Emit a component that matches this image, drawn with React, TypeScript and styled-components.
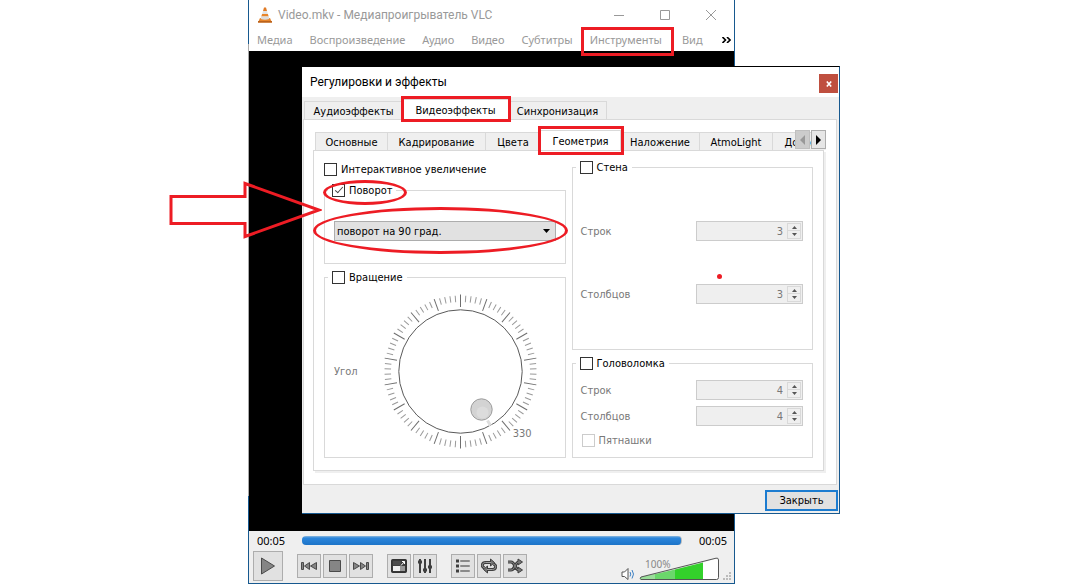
import React from 'react';
import styled, { createGlobalStyle, css } from 'styled-components';

const uiFont = '"DejaVu Sans Condensed", "Noto Sans", sans-serif';
const menuFont = '"Noto Sans", "Open Sans", sans-serif';
const titleFont = 'Roboto, "Noto Sans", sans-serif';
const red = '#ed1c24';
const line = '#d9d9d9';
const face = '#efefef';
const accent = '#17598f';

const GlobalStyle = createGlobalStyle`
  *, *::before, *::after { box-sizing: border-box; }
  body { margin: 0; background: #fff; font-family: ${uiFont}; font-size: 11px; line-height: 13px; color: #000; }
  button, input, select { font: inherit; color: inherit; margin: 0; padding: 0; }
  button { display: flex; align-items: center; justify-content: center; }
  svg { display: block; }
`;

/* red marker frame drawn round a control */
const marked = css`
  position: relative;
  &::after {
    content: '';
    position: absolute;
    border: 3px solid ${red};
    pointer-events: none;
    z-index: 3;
  }
`;

const Desktop = styled.main`
  display: flex;
  min-height: 100vh;
  min-width: 1000px;
  padding: 0 346px 1px 248px;
`;

const PlayerWindow = styled.section`
  flex: 1;
  min-width: 0;
  display: flex;
  flex-direction: column;
  border-right: 1px solid ${accent};
  border-bottom: 1px solid ${accent};
  padding-left: 1px;
  background: linear-gradient(${accent} 0 44px, #a9a9a9 44px 496px, ${accent} 496px);
`;

const TitleBar = styled.header`
  display: flex;
  align-items: center;
  height: 29px;
  padding: 0 17px 0 8px;
  gap: 5px;
  background: #fff;
  font-family: ${titleFont};
  font-size: 12px;
  line-height: 16px;
  color: #999;
`;

const WindowTitle = styled.h1`
  flex: 1;
  margin: 0;
  font: inherit;
  white-space: nowrap;
`;

const CaptionButtons = styled.div`
  display: flex;
  gap: 34px;
`;

const CaptionButton = styled.button`
  width: 12px;
  height: 12px;
  border: 0;
  background: none;
`;

const MenuBar = styled.nav`
  display: flex;
  align-items: center;
  height: 22px;
  padding: 0 3px 0 8px;
  gap: 17px;
  background: #fff;
  font-family: ${menuFont};
  font-size: 11px;
  line-height: 16px;
  color: #999;
`;

const MenuItem = styled.button<{ $marked?: boolean }>`
  border: 0;
  background: none;
  white-space: nowrap;
  ${p => p.$marked && css`
    ${marked}
    padding-right: 3px;
    &::after { inset: -5px -9px -8px -9px; }
  `}
`;

const MenuMore = styled.button`
  margin-left: auto;
  border: 0;
  background: none;
  color: #000;
`;

const Video = styled.div`
  flex: 1;
  padding: 15px 0 17px 53px;
  background: #000;
`;

const Dialog = styled.section`
  position: relative;
  margin-right: -106px;
  background: ${face};
  border-top: 1px solid #000;
  border-right: 1px solid ${accent};
  border-bottom: 1px solid ${accent};
`;

const DialogTitle = styled.header`
  display: flex;
  align-items: center;
  justify-content: space-between;
  height: 30px;
  padding: 0 1px 0 8px;
  background: #fff;
  font-family: ${titleFont};
  font-size: 12px;
  line-height: 16px;
`;

const DialogHeading = styled.h2`
  margin: 0;
  font: inherit;
`;

const CloseBox = styled.button`
  width: 19px;
  height: 19px;
  margin-top: 3px;
  border: 0;
  background: #bf4f3f;
`;

const OuterTabs = styled.div`
  display: flex;
  align-items: flex-end;
  height: 22px;
  padding-left: 2px;
`;

const InnerTabs = styled.div`
  position: relative;
  display: flex;
  align-items: flex-end;
  height: 21px;
  margin: 0 -2px 0 2px;
`;

const TabStrip = styled.div`
  flex: 1;
  width: 0;
  display: flex;
  align-items: flex-end;
  height: 29px;
  margin: -9px 0 0;
  overflow-x: clip;
`;

const Tab = styled.button<{ $w: number; $active?: boolean; $inner?: boolean }>`
  flex: none;
  width: ${p => p.$w}px;
  height: 18px;
  padding-top: 2px;
  border: 1px solid ${line};
  border-width: 1px 1px 0 0;
  background: ${face};
  white-space: nowrap;
  &:first-child { border-left-width: 1px; }
  ${p => p.$active && css`
    ${marked}
    height: 20px;
    background: #fff;
    &::after { inset: ${p.$inner ? '-5px -4px -5px -3px' : '-4px -3px -3px -2px'}; }
  `}
`;

const Scrollers = styled.div`
  position: absolute;
  right: 0;
  top: 1px;
  display: flex;
  gap: 1px;
`;

const Scroller = styled.button`
  width: 15px;
  height: 19px;
  border: 1px solid #adadad;
  background: #e6e6e6;
  &:disabled { background: #ccc; border-color: #bfbfbf; }
`;

const OuterPane = styled.div`
  margin: 0 2px 0 1px;
  padding: 9px 12px 13px 9px;
  border: 1px solid ${line};
  background: #fff;
`;

const InnerPane = styled.div`
  display: grid;
  grid-template-columns: 1fr 1fr;
  gap: 6px;
  padding: 10px 10px 12px;
  border: 1px solid ${line};
  box-shadow: 2px 2px 0 ${face};
  background: #fff;
`;

const Column = styled.div`
  display: flex;
  flex-direction: column;
  gap: 7px;
`;

const Group = styled.fieldset`
  position: relative;
  min-width: 0;
  margin: 0;
  padding: 0;
  border: 1px solid ${line};
`;

const Legend = styled.legend<{ $marked?: boolean }>`
  height: 13px;
  margin-left: 3px;
  padding: 0 4px;
  ${p => p.$marked && css`
    ${marked}
    &::after { inset: -4px -11px -8px -5px; border-radius: 50%; }
  `}
`;

const CheckLabel = styled.label<{ $off?: boolean }>`
  display: flex;
  align-items: center;
  gap: 4px;
  height: 13px;
  white-space: nowrap;
  color: ${p => (p.$off ? '#787878' : '#000')};
`;

const Zoomer = styled.div`
  padding: 2px 0 1px;
`;

const CheckBox = styled.input`
  appearance: none;
  position: relative;
  width: 13px;
  height: 13px;
  border: 1px solid #333;
  background: #fff;
  &:disabled { border-color: #ccc; }
  &:checked::after {
    content: '';
    position: absolute;
    left: 4px;
    top: 0;
    width: 4px;
    height: 8px;
    border: solid #444;
    border-width: 0 1px 1px 0;
    transform: rotate(42deg);
  }
`;

const RotateBody = styled.div`
  padding: 24px 9px 22px;
`;

const Combo = styled.div`
  display: flex;
  align-items: center;
  ${marked}
  &::after { inset: -14px -12px -13px -21px; border-radius: 50%; }
`;

const Select = styled.select`
  appearance: none;
  width: 100%;
  height: 20px;
  padding: 0 20px 0 2px;
  border: 1px solid #adadad;
  border-radius: 0;
  background: #e1e1e1;
`;

const ComboArrow = styled.svg`
  position: absolute;
  right: 6px;
  top: 8px;
  pointer-events: none;
`;

const AngleBody = styled.div`
  display: flex;
  align-items: center;
  gap: 25px;
  padding: 9px 9px 8px;
  color: #787878;
`;

const DialBox = styled.div`
  position: relative;
`;

const Angle = styled.output`
  position: absolute;
  right: 7px;
  bottom: 9px;
`;

const Rows = styled.div<{ $roomy?: boolean }>`
  display: flex;
  flex-direction: column;
  gap: ${p => (p.$roomy ? 43 : 6)}px;
  padding: ${p => (p.$roomy ? '47px 9px 45px 8px' : '10px 9px 10px 8px')};
`;

const Row = styled.div`
  display: flex;
  align-items: center;
  justify-content: space-between;
  color: #787878;
`;

const Tick = styled.div`
  padding: 2px 1px 0;
`;

const Spin = styled.div`
  display: flex;
  align-items: center;
  width: 107px;
  height: 20px;
  padding-right: 1px;
  border: 1px solid #ccc;
  background: ${face};
`;

const SpinInput = styled.input`
  flex: 1;
  width: 0;
  border: 0;
  background: none;
  text-align: right;
  padding-right: 4px;
  color: #787878;
`;

const SpinButtons = styled.div`
  display: flex;
  flex-direction: column;
  width: 14px;
`;

const SpinButton = styled.button`
  height: 8px;
  border: 1px solid ${line};
  background: ${face};
  & + & { border-top: 0; }
`;

const Footer = styled.footer`
  display: flex;
  justify-content: flex-end;
  padding: 5px 1px 2px;
`;

const CloseButton = styled.button`
  width: 73px;
  height: 21px;
  border: 2px solid #1c7cd0;
  background: #e1e1e1;
`;

const PointerArrow = styled.svg`
  position: absolute;
  left: -134px;
  top: 112px;
  z-index: 3;
`;

const Speck = styled.span`
  position: absolute;
  left: 144px;
  top: 100px;
  width: 5px;
  height: 5px;
  border-radius: 50%;
  background: ${red};
`;

const Controls = styled.footer`
  background: ${face};
`;

const SeekRow = styled.div`
  display: flex;
  align-items: center;
  gap: 17px;
  height: 18px;
  padding: 0 7px 0 8px;
  font-family: ${menuFont};
`;

const Seek = styled.input`
  appearance: none;
  flex: 1;
  min-width: 0;
  height: 9px;
  border-radius: 4px;
  border-right: 1px solid #bbb;
  background: linear-gradient(#8db8dd, #2b86dc 2px, #1d74c8);
  &::-webkit-slider-thumb { appearance: none; width: 0; height: 0; }
`;

const ButtonRow = styled.div`
  display: flex;
  align-items: center;
  gap: 14px;
  padding: 2px 2px 2px 4px;
`;

const ButtonGroup = styled.div`
  display: flex;
  gap: 2px;
`;

const ControlButton = styled.button<{ $big?: boolean }>`
  width: ${p => (p.$big ? 30 : 24)}px;
  height: ${p => (p.$big ? 30 : 24)}px;
  border: 1px solid #adadad;
  background: #e1e1e1;
`;

const VolumeArea = styled.div`
  display: flex;
  align-items: flex-end;
  gap: 3px;
  height: 30px;
  margin-left: auto;
`;

const Mute = styled.button`
  width: 15px;
  height: 14px;
  border: 0;
  background: none;
`;

const Volume = styled.label`
  position: relative;
  display: block;
  color: #888;
`;

const VolumeText = styled.span`
  position: absolute;
  left: 6px;
  top: 2px;
  font-family: ${menuFont};
  font-size: 10px;
  line-height: 12px;
`;

const VolumeInput = styled.input`
  position: absolute;
  inset: 0;
  width: 100%;
  opacity: 0;
`;

const Cone = () => (
  <svg width="16" height="16" viewBox="0 0 16 16">
    <path d="M3 11h10l2 4.5H1z" fill="#e8852a" />
    <path d="M1 14h14v1.6H1z" fill="#b9621d" />
    <path d="M7 0.5h2L10 4H6z" fill="#e07a25" />
    <path d="M6 4h4l.9 3H5.1z" fill="#e4e4e4" />
    <path d="M5.1 7h5.8l.8 2.6H4.3z" fill="#e8852a" />
    <path d="M4.3 9.6h7.4l.6 2.4q-4.3 1.6-8.6 0z" fill="#dcdcdc" />
  </svg>
);

const Dial = () => {
  const ticks = Array.from({ length: 90 }, (_, i) => i);
  return (
    <svg width="156" height="156" viewBox="-77.5 -78.5 156 156" role="img" aria-label="Угол">
      {ticks.map(i => (
        <line
          key={i}
          x1="0"
          x2="0"
          y1={i % 5 ? -76 : -77}
          y2={i % 5 ? -69.5 : -64.5}
          stroke={i % 5 ? '#999' : '#6e6e6e'}
          transform={`rotate(${i * 4})`}
        />
      ))}
      <circle r="61.7" fill="#fff" stroke="#5a5a5a" />
      <path d="M27 49l3 5" stroke="#ddd" strokeWidth="3" />
      <circle cx="21" cy="38" r="10.7" fill="#d3d3d3" stroke="#9c9c9c" />
      <circle cx="22" cy="41" r="6" fill="#dcdcdc" />
    </svg>
  );
};

const SpinBox = ({ id, value }: { id: string; value: number }) => (
  <Spin>
    <SpinInput id={id} type="text" inputMode="numeric" defaultValue={value} disabled />
    <SpinButtons>
      <SpinButton type="button" disabled aria-label="Больше">
        <svg width="5" height="3" viewBox="0 0 5 3"><path d="M0 3L2.500 0L5 3z" fill="#555" /></svg>
      </SpinButton>
      <SpinButton type="button" disabled aria-label="Меньше">
        <svg width="5" height="3" viewBox="0 0 5 3"><path d="M0 0L2.500 3L5 0z" fill="#555" /></svg>
      </SpinButton>
    </SpinButtons>
  </Spin>
);

const dark = '#4a4a4a';
const fill = '#858585';

const icons: Record<string, React.ReactNode> = {
  prev: <path d="M.5 4.500h2v7h-2zM8.500 4.500v7L3.500 8zM15.500 4.500v7L9.500 8z" fill={fill} stroke={dark} />,
  stop: <path d="M2.500 2.500h11v11h-11z" fill={fill} stroke={dark} />,
  next: <path d="M15.500 4.500h-2v7h2zM7.500 4.500v7L12.500 8zM.5 4.500v7L6.500 8z" fill={fill} stroke={dark} />,
  full: (
    <g>
      <rect x=".75" y="1.750" width="14.500" height="12.500" rx="1" fill="#3f3f3f" stroke="#333" strokeWidth="1.500" />
      <path d="M2 3h8v4H2z" fill="#4b4b4b" />
      <path d="M2 8h7v5H2z" fill="#eee" />
      <path d="M9 8h5v5H9z" fill="#999" />
      <path d="M10 7.500l3.500-4M11 3.500h2.500v2.500" stroke="#fff" fill="none" />
    </g>
  ),
  eq: (
    <g stroke="#3f3f3f" fill="none">
      <path d="M3 1v14M8 1v14M13 1v14" strokeWidth="2" />
      <path d="M1 4h4M6 12h4M11 9h4" strokeWidth="3" />
    </g>
  ),
  list: (
    <g>
      <path d="M1 3h3M1 8h3M1 13h3" stroke="#3f3f3f" strokeWidth="3" />
      <path d="M5.500 2.500h9v1h-9zM5.500 7.500h9v1h-9zM5.500 12.500h9v1h-9z" fill="#ddd" stroke="#8a8a8a" />
    </g>
  ),
  loop: (
    <g fill="none" strokeLinejoin="round">
      <path d="M3.500 10C0 8.500 1 4.500 4.500 4.500H10M12.500 6c3.500 1.500 2.500 5.500-1 5.500H6" stroke="#3f3f3f" strokeWidth="3" />
      <path d="M9.500 1v7L13.500 4.500zM6.500 8v7L2.500 11.500z" fill="#777" stroke="#3f3f3f" />
      <path d="M3.500 10C0 8.500 1 4.500 4.500 4.500H10M12.500 6c3.500 1.500 2.500 5.500-1 5.500H6" stroke="#a0a0a0" />
    </g>
  ),
  shuffle: (
    <g fill="none" strokeLinejoin="round">
      <path d="M1 4h3c4 0 4 8 8 8M1 12h3c4 0 4-8 8-8" stroke="#3f3f3f" strokeWidth="3.200" />
      <path d="M11 1l4.500 3L11 7zM11 9l4.500 3-4.500 3z" fill="#777" stroke="#3f3f3f" />
      <path d="M1 4h3c4 0 4 8 8 8M1 12h3c4 0 4-8 8-8" stroke="#8a8a8a" />
    </g>
  ),
};

const controlGroups = [
  [['prev', 'Назад'], ['stop', 'Стоп'], ['next', 'Вперёд']],
  [['full', 'Полный экран'], ['eq', 'Эффекты']],
  [['list', 'Плейлист'], ['loop', 'Повтор'], ['shuffle', 'Случайно']],
];

const menus = ['Медиа', 'Воспроизведение', 'Аудио', 'Видео', 'Субтитры', 'Инструменты', 'Вид'];

const outerTabs: [string, number][] = [['Аудиоэффекты', 99], ['Видеоэффекты', 106], ['Синхронизация', 98]];
const innerTabs: [string, number][] = [
  ['Основные', 73], ['Кадрирование', 98], ['Цвета', 55], ['Геометрия', 80],
  ['Наложение', 79], ['AtmoLight', 73], ['Дополнительно', 106],
];

export default function App() {
  return (
    <>
      <GlobalStyle />
      <Desktop>
        <PlayerWindow>
          <TitleBar>
            <Cone />
            <WindowTitle>Video.mkv - Медиапроигрыватель VLC</WindowTitle>
            <CaptionButtons>
              <CaptionButton type="button" aria-label="Свернуть">
                <svg width="12" height="12"><path d="M1 6.500h10" stroke="#999" /></svg>
              </CaptionButton>
              <CaptionButton type="button" aria-label="Развернуть">
                <svg width="12" height="12"><path d="M1.500 1.500h9v9h-9z" fill="none" stroke="#999" /></svg>
              </CaptionButton>
              <CaptionButton type="button" aria-label="Закрыть окно">
                <svg width="12" height="12"><path d="M1 1l10 10M11 1L1 11" stroke="#999" /></svg>
              </CaptionButton>
            </CaptionButtons>
          </TitleBar>
          <MenuBar>
            {menus.map(m => (
              <MenuItem key={m} type="button" $marked={m === 'Инструменты'}>{m}</MenuItem>
            ))}
            <MenuMore type="button" aria-label="Ещё">
              <svg width="9" height="6" viewBox="0 0 9 6">
                <path d="M.5 0L3.500 3L.5 6M5 0L8 3L5 6" fill="none" stroke="#000" strokeWidth="1.600" />
              </svg>
            </MenuMore>
          </MenuBar>

          <Video>
            <Dialog role="dialog" aria-label="Регулировки и эффекты">
              <DialogTitle>
                <DialogHeading>Регулировки и эффекты</DialogHeading>
                <CloseBox type="button" aria-label="Закрыть диалог">
                  <svg width="6" height="6" viewBox="0 0 6 6"><path d="M.8 .5l4.400 5M5.200 .5l-4.400 5" stroke="#fff" strokeWidth="1.600" /></svg>
                </CloseBox>
              </DialogTitle>

              <OuterTabs role="tablist">
                {outerTabs.map(([t, w]) => (
                  <Tab key={t} type="button" role="tab" $w={w} $active={t === 'Видеоэффекты'} aria-selected={t === 'Видеоэффекты'}>{t}</Tab>
                ))}
              </OuterTabs>

              <OuterPane>
                <InnerTabs>
                  <TabStrip role="tablist">
                    {innerTabs.map(([t, w]) => (
                      <Tab key={t} type="button" role="tab" $inner $w={w} $active={t === 'Геометрия'} aria-selected={t === 'Геометрия'}>{t}</Tab>
                    ))}
                  </TabStrip>
                  <Scrollers>
                    <Scroller type="button" disabled aria-label="Вкладки влево">
                      <svg width="5" height="10"><path d="M5 0v10L0 5z" fill="#999" /></svg>
                    </Scroller>
                    <Scroller type="button" aria-label="Вкладки вправо">
                      <svg width="5" height="10"><path d="M0 0v10L5 5z" fill="#000" /></svg>
                    </Scroller>
                  </Scrollers>
                </InnerTabs>

                <InnerPane role="tabpanel">
                  <Column>
                    <Zoomer>
                      <CheckLabel><CheckBox type="checkbox" />Интерактивное увеличение</CheckLabel>
                    </Zoomer>
                    <Group>
                      <Legend $marked>
                        <CheckLabel><CheckBox type="checkbox" defaultChecked />Поворот</CheckLabel>
                      </Legend>
                      <RotateBody>
                        <Combo>
                          <Select aria-label="Поворот" defaultValue="90">
                            <option value="90">поворот на 90 град.</option>
                          </Select>
                          <ComboArrow width="7" height="4"><path d="M0 0h7L3.500 4z" fill="#000" /></ComboArrow>
                        </Combo>
                      </RotateBody>
                    </Group>
                    <Group>
                      <Legend>
                        <CheckLabel><CheckBox type="checkbox" />Вращение</CheckLabel>
                      </Legend>
                      <AngleBody>
                        <span>Угол</span>
                        <DialBox>
                          <Dial />
                          <Angle>330</Angle>
                        </DialBox>
                      </AngleBody>
                    </Group>
                  </Column>

                  <Column>
                    <Group>
                      <Legend>
                        <CheckLabel><CheckBox type="checkbox" />Стена</CheckLabel>
                      </Legend>
                      <Rows $roomy>
                        <Row><label htmlFor="wall-rows">Строк</label><SpinBox id="wall-rows" value={3} /></Row>
                        <Row><label htmlFor="wall-cols">Столбцов</label><SpinBox id="wall-cols" value={3} /></Row>
                      </Rows>
                      <Speck />
                    </Group>
                    <Group>
                      <Legend>
                        <CheckLabel><CheckBox type="checkbox" />Головоломка</CheckLabel>
                      </Legend>
                      <Rows>
                        <Row><label htmlFor="puzzle-rows">Строк</label><SpinBox id="puzzle-rows" value={4} /></Row>
                        <Row><label htmlFor="puzzle-cols">Столбцов</label><SpinBox id="puzzle-cols" value={4} /></Row>
                        <Tick>
                          <CheckLabel $off><CheckBox type="checkbox" disabled />Пятнашки</CheckLabel>
                        </Tick>
                      </Rows>
                    </Group>
                  </Column>
                </InnerPane>
              </OuterPane>

              <Footer>
                <CloseButton type="button">Закрыть</CloseButton>
              </Footer>

              <PointerArrow width="154" height="62" viewBox="0 0 154 62">
                <path d="M3 17.500H77V4.500L151 31L77 57.500V44.500H3z" fill="none" stroke={red} strokeWidth="3" />
              </PointerArrow>
            </Dialog>
          </Video>

          <Controls>
            <SeekRow>
              <span>00:05</span>
              <Seek type="range" min={0} max={5} defaultValue={5} aria-label="Позиция" />
              <span>00:05</span>
            </SeekRow>
            <ButtonRow>
              <ControlButton type="button" $big aria-label="Воспроизвести">
                <svg width="16" height="20" viewBox="0 0 16 20"><path d="M1.500 2v16L14.500 10z" fill={fill} stroke={dark} /></svg>
              </ControlButton>
              {controlGroups.map((group, i) => (
                <ButtonGroup key={i}>
                  {group.map(([id, label]) => (
                    <ControlButton key={id} type="button" aria-label={label}>
                      <svg width="16" height="16" viewBox="0 0 16 16">{icons[id]}</svg>
                    </ControlButton>
                  ))}
                </ButtonGroup>
              ))}
              <VolumeArea>
                <Mute type="button" aria-label="Звук">
                  <svg width="15" height="14" viewBox="0 0 15 14" fill="none">
                    <path d="M1 5h2.500L7 1.500v11L3.500 9.500H1z" fill="#fff" stroke="#555" />
                    <path d="M9 5q1.500 2 0 4.500" stroke="#3a7fc4" />
                    <path d="M11 3q3 4 0 8.500" stroke="#3a7fc4" />
                  </svg>
                </Mute>
                <Volume>
                  <svg width="81" height="25" viewBox="0 0 81 25">
                    <path d="M1 23.500V21.500L36 13.500V23.500z" fill="#6bd76b" />
                    <path d="M1 23.500V21.500L16 18V23.500z" fill="#9adf9a" />
                    <path d="M36 13.500L64 6.500V23.500H36z" fill="#33d12b" />
                    <path d="M64 6.500L79.500 2v21.500H64z" fill="#fff" />
                    <path d="M2 23.500Q.5 22.500 2 21L77 2.200Q79.500 1.500 79.500 4V21.500Q79.500 23.500 77.500 23.500z" fill="none" stroke="#555" />
                  </svg>
                  <VolumeText>100%</VolumeText>
                  <VolumeInput type="range" min={0} max={125} defaultValue={100} aria-label="Громкость" />
                </Volume>
                <svg width="9" height="9" viewBox="0 0 9 9">
                  <path d="M6 0h2v2H6zM3 3h2v2H3zM6 3h2v2H6zM0 6h2v2H0zM3 6h2v2H3zM6 6h2v2H6z" fill="#bbb" />
                </svg>
              </VolumeArea>
            </ButtonRow>
          </Controls>
        </PlayerWindow>
      </Desktop>
    </>
  );
}
